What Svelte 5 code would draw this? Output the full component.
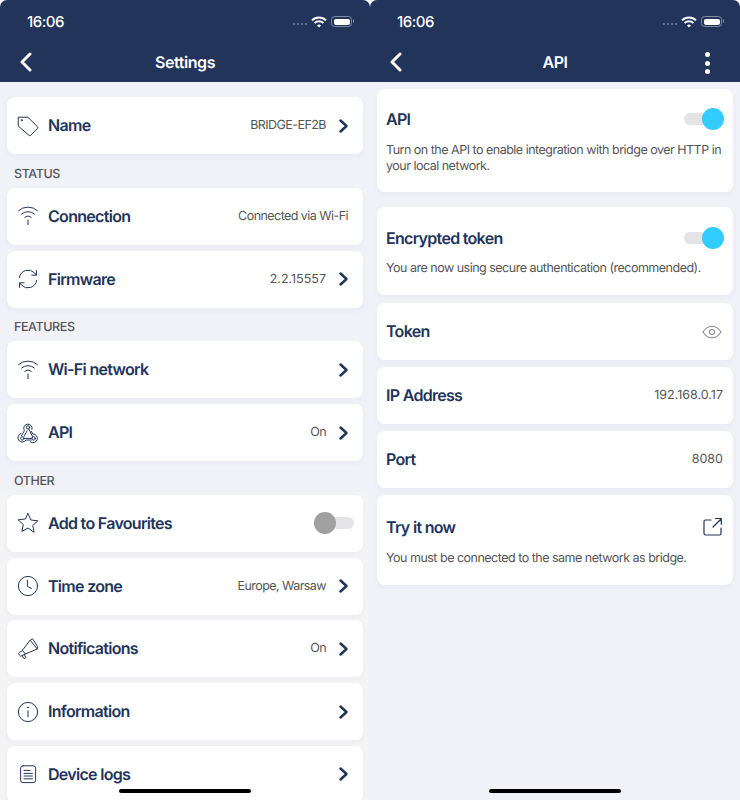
<script>
  const chevronRows = {
    features: [
      { icon: 'wifi', label: 'Wi-Fi network', chevron: true },
      { icon: 'hook', label: 'API', value: 'On', chevron: true }
    ],
    other: [
      { icon: 'star', label: 'Add to Favourites', toggle: true },
      { icon: 'clock', label: 'Time zone', value: 'Europe, Warsaw', chevron: true },
      { icon: 'horn', label: 'Notifications', value: 'On', chevron: true },
      { icon: 'info', label: 'Information', chevron: true },
      { icon: 'logs', label: 'Device logs', chevron: true }
    ],
    status: [
      { icon: 'wifi', label: 'Connection', value: 'Connected via Wi-Fi' },
      { icon: 'sync', label: 'Firmware', value: '2.2.15557', num: true, chevron: true }
    ]
  };
</script>

{#snippet statusBar()}
  <div class="status-bar">
    <span class="time">16:06</span>
    <div class="indicators">
      <span class="dots"><i></i><i></i><i></i><i></i></span>
      <svg width="16" height="12" viewBox="0 0 16 12" fill="none" stroke="#fff" stroke-width="2">
        <path d="M1 4.4a10 10 0 0 1 14 0" />
        <path d="M3.6 7a6.4 6.4 0 0 1 8.8 0" />
        <path d="M8 11.6 6 9.5a2.8 2.8 0 0 1 4 0z" fill="#fff" stroke="none" />
      </svg>
      <span class="battery"><b></b></span>
    </div>
  </div>
{/snippet}

{#snippet back()}
  <svg class="back" width="14" height="20" viewBox="0 0 14 20" fill="none" stroke="#fff" stroke-width="3" stroke-linecap="round" stroke-linejoin="round">
    <path d="M11 2 3 10l8 8" />
  </svg>
{/snippet}

{#snippet icon(name)}
  <svg class="icon" width="24" height="24" viewBox="0 0 24 24" fill="none" stroke="#22345a" stroke-width="1" stroke-linecap="round" stroke-linejoin="round">
    {#if name === 'tag'}
      <path d="M2.600 3.200h9.200l9.600 9.400a1.400 1.400 0 0 1 0 2l-6.600 6.600a1.400 1.400 0 0 1-2 0L2.600 12.400z" />
      <circle cx="5.800" cy="6.200" r="0.600" />
    {:else if name === 'wifi'}
      <path d="M2.600 6.600a14 14 0 0 1 18.800 0" />
      <path d="M5.600 10a9.600 9.600 0 0 1 12.800 0" />
      <path d="M8.800 13.200a5 5 0 0 1 6.400 0" />
      <path d="M12 16v4.600" />
    {:else if name === 'sync'}
      <path d="M3.400 10.600A8.800 8.800 0 0 1 18.600 6l1.600 2" />
      <path d="M20.400 3.600v4.600h-4.600" />
      <path d="M20.600 13.400A8.800 8.800 0 0 1 5.400 18l-1.600-2" />
      <path d="M3.600 20.400v-4.600h4.600" />
    {:else if name === 'hook'}
      <circle cx="12" cy="6.400" r="1.700" />
      <circle cx="6.400" cy="17.400" r="1.700" />
      <circle cx="17.600" cy="17.400" r="1.700" />
      <path d="M8.100 17.400h7.800" />
      <path d="M12.800 8 16.600 15.800" />
      <path d="M16 8.400a4.200 4.200 0 1 0-7.600 1.200L5.400 15" />
      <path d="M5 12.400a4.400 4.400 0 1 0 5 6.600h5.200" />
      <path d="M11 9.800 8.400 15" />
      <path d="M15.400 10.400l1.400 2.600a4.400 4.400 0 1 1-2.400 8" />
    {:else if name === 'star'}
      <path d="m12 2.600 2.900 6.400 7 .8-5.200 4.700 1.400 6.900L12 17l-6.100 3.400 1.400-6.900-5.200-4.700 7-.8z" />
    {:else if name === 'clock'}
      <circle cx="12" cy="12" r="9.600" />
      <path d="M11.400 6.200v6.200l4 2" />
    {:else if name === 'horn'}
      <path d="M14.400 3.400 21.200 12 9.400 17 6.600 13.600z" />
      <path d="M14.800 2.800l1.800-1 4.800 7.400-.2 2.600" />
      <path d="M6.600 13.600 3.600 15.200a1.800 1.800 0 0 0-.6 2.400l.4.600a1.800 1.800 0 0 0 2.400.6L9.400 17" />
      <path d="M6.400 19l1.600 2.600 1.800-1-1.400-3" />
    {:else if name === 'info'}
      <circle cx="12" cy="12" r="9.600" />
      <path d="M12 10.800v6" />
      <circle cx="12" cy="7.400" r="0.500" />
    {:else if name === 'logs'}
      <rect x="4.600" y="3.800" width="15" height="16.800" rx="2.400" />
      <path d="M8 8.400h6M8 11.400h8.400M8 14h8.400M8 16.800h8.400" />
    {/if}
  </svg>
{/snippet}

{#snippet chevron()}
  <svg class="chevron" width="12" height="16" viewBox="0 0 12 16" fill="none" stroke="#22345a" stroke-width="2.500" stroke-linecap="round" stroke-linejoin="round">
    <path d="m2.500 2.500 6 5.500-6 5.500" />
  </svg>
{/snippet}

{#snippet row(item)}
  <div class="card row">
    {@render icon(item.icon)}
    <span class="label">{item.label}</span>
    {#if item.value}
      <span class="value" class:num={item.num}>{item.value}</span>
    {/if}
    {#if item.chevron}
      {@render chevron()}
    {/if}
    {#if item.toggle}
      <span class="toggle"><i></i></span>
    {/if}
  </div>
{/snippet}

<div class="screens">
  <section class="screen">
    <header>
      {@render statusBar()}
      <div class="nav">
        {@render back()}
        <h1>Settings</h1>
      </div>
    </header>
    <main class="settings">
      <div class="group">
        {@render row({ icon: 'tag', label: 'Name', value: 'BRIDGE-EF2B', chevron: true })}
      </div>
      <h2>STATUS</h2>
      <div class="group">
        {#each chevronRows.status as item}
          {@render row(item)}
        {/each}
      </div>
      <h2>FEATURES</h2>
      <div class="group">
        {#each chevronRows.features as item}
          {@render row(item)}
        {/each}
      </div>
      <h2>OTHER</h2>
      <div class="group other">
        {#each chevronRows.other as item}
          {@render row(item)}
        {/each}
      </div>
    </main>
    <div class="home"></div>
  </section>

  <section class="screen">
    <header>
      {@render statusBar()}
      <div class="nav">
        {@render back()}
        <h1>API</h1>
        <span class="more"><i></i><i></i><i></i></span>
      </div>
    </header>
    <main class="api">
      <div class="card block tall">
        <div class="block-head">
          <span class="label">API</span>
          <span class="toggle on"><i></i></span>
        </div>
        <p>Turn on the API to enable integration with bridge over HTTP in your local network.</p>
      </div>
      <div class="card block encrypted">
        <div class="block-head">
          <span class="label">Encrypted token</span>
          <span class="toggle on"><i></i></span>
        </div>
        <p>You are now using secure authentication (recommended).</p>
      </div>
      <div class="stack">
        <div class="card plain">
          <span class="label">Token</span>
          <svg width="20" height="14" viewBox="0 0 20 14" fill="none" stroke="#8c8c8c" stroke-width="1.100">
            <path d="M1 7c2.400-3.800 5.400-5.800 9-5.800s6.600 2 9 5.800c-2.400 3.800-5.400 5.800-9 5.800S3.400 10.800 1 7z" />
            <circle cx="10" cy="7" r="2.500" />
          </svg>
        </div>
        <div class="card plain">
          <span class="label">IP Address</span>
          <span class="value num">192.168.0.17</span>
        </div>
        <div class="card plain">
          <span class="label">Port</span>
          <span class="value num">8080</span>
        </div>
        <div class="card block try">
          <div class="block-head">
            <span class="label">Try it now</span>
            <svg class="open" width="20" height="20" viewBox="0 0 20 20" fill="none" stroke="#22345a" stroke-width="1.200" stroke-linecap="round" stroke-linejoin="round">
              <path d="M8 3H2.500A1.500 1.500 0 0 0 1 4.500v12A1.500 1.500 0 0 0 2.500 18h14a1.500 1.500 0 0 0 1.500-1.500V11" />
              <path d="M10 10 18 2M12.500 1.500h5.800v5.800" />
            </svg>
          </div>
          <p>You must be connected to the same network as bridge.</p>
        </div>
      </div>
    </main>
    <div class="home"></div>
  </section>
</div>

<style>
  :global(body) {
    background: #fff;
    font-family: Inter, "Liberation Sans", sans-serif;
    text-rendering: geometricPrecision;
  }

  .screens {
    display: flex;
    width: 740px;
    height: 800px;
    overflow: hidden;
  }

  .screen {
    position: relative;
    width: 370px;
    height: 800px;
    overflow: hidden;
    background: #f1f1f8;
    border-radius: 7px 7px 0 0;
  }

  header {
    height: 82px;
    background: #22345a;
    color: #fff;
  }

  .status-bar {
    display: flex;
    align-items: center;
    justify-content: space-between;
    height: 44px;
    padding: 0 16px 1px 27px;
    box-sizing: border-box;
  }

  .time {
    font-size: 15px;
    font-weight: 500;
    letter-spacing: -0.5px;
  }

  .indicators {
    display: flex;
    align-items: center;
    gap: 4px;
  }

  .dots {
    display: flex;
    gap: 1.500px;
    margin-top: 5px;
  }

  .dots i {
    width: 2.500px;
    height: 2.500px;
    background: #5f6d8b;
  }

  .battery {
    position: relative;
    display: block;
    width: 21px;
    height: 11px;
    margin-right: 2px;
    padding: 1.500px;
    box-sizing: border-box;
    border: 1px solid #7f8aa3;
    border-radius: 3.500px;
  }

  .battery b {
    display: block;
    width: 100%;
    height: 100%;
    background: #fff;
    border-radius: 2px;
  }

  .battery::after {
    content: "";
    position: absolute;
    right: -3px;
    top: 2px;
    width: 1.500px;
    height: 4px;
    background: #7f8aa3;
    border-radius: 0 1px 1px 0;
  }

  .nav {
    position: relative;
    height: 38px;
    display: flex;
    align-items: center;
    justify-content: center;
  }

  .back {
    position: absolute;
    left: 19px;
    top: 8px;
  }

  h1 {
    margin: 0;
    font-size: 16px;
    font-weight: 600;
    letter-spacing: -0.4px;
    position: relative;
    top: -1px;
  }

  .more {
    position: absolute;
    right: 30px;
    top: 8px;
    display: flex;
    flex-direction: column;
    gap: 3.500px;
  }

  .more i {
    width: 5px;
    height: 5px;
    border-radius: 50%;
    background: #fff;
  }

  main {
    padding: 0 7px;
  }

  .settings {
    padding-top: 15px;
  }

  .api {
    padding-top: 7px;
  }

  .group {
    display: flex;
    flex-direction: column;
    gap: 5.750px;
  }

  .other {
    margin: -2px -5px 0 -7px;
    padding: 2px 5px 40px 7px;
    background: #f4f4f6;
  }

  .stack {
    display: flex;
    flex-direction: column;
    gap: 7px;
  }

  h2 {
    margin: 0;
    height: 33.750px;
    padding: 12.500px 0 0 7px;
    box-sizing: border-box;
    font-size: 12.500px;
    line-height: 15px;
    font-weight: 500;
    letter-spacing: -0.4px;
    color: #555;
  }

  .card {
    background: #fff;
    border-radius: 8px;
    box-shadow: 0 2px 6px rgba(34, 52, 90, 0.04);
  }

  .row {
    display: flex;
    align-items: center;
    flex: none;
    height: 57px;
    box-sizing: border-box;
    padding: 0 9px;
  }

  .icon {
    flex: none;
    margin-right: 8px;
  }

  .label {
    font-size: 16px;
    font-weight: 600;
    letter-spacing: -0.7px;
    color: #22345a;
    position: relative;
    top: -0.500px;
  }

  .value {
    margin-left: auto;
    font-size: 12.500px;
    letter-spacing: -0.550px;
    color: #555;
  }

  .value.num {
    letter-spacing: 0;
  }

  .row .value:last-child {
    margin-right: 6px;
  }

  .plain .value {
    margin-right: 1px;
  }

  .chevron {
    flex: none;
    margin-left: 12px;
    margin-right: 4px;
  }

  .row .label + .chevron {
    margin-left: auto;
  }

  .toggle {
    position: relative;
    display: block;
    flex: none;
    width: 40px;
    height: 12px;
    border-radius: 6px;
    background: #e4e4e6;
  }

  .row .toggle {
    margin-left: auto;
  }

  .toggle i {
    position: absolute;
    left: 0;
    top: -5px;
    width: 22px;
    height: 22px;
    border-radius: 50%;
    background: #a0a0a0;
  }

  .toggle.on i {
    left: auto;
    right: 0;
    background: #33ccff;
  }

  .block {
    padding: 19px 9px 0;
    box-sizing: border-box;
  }

  .tall {
    height: 103px;
    margin-bottom: 15px;
  }

  .encrypted {
    height: 88px;
    margin-bottom: 8px;
    padding-top: 20px;
  }

  .try {
    height: 90px;
    padding-top: 21px;
  }

  .block-head {
    display: flex;
    align-items: center;
    justify-content: space-between;
    height: 22px;
    margin-bottom: 13px;
  }

  .encrypted .block-head {
    margin-bottom: 12px;
  }

  .open {
    margin-right: 1px;
  }

  p {
    margin: 0;
    font-size: 12.500px;
    line-height: 15.500px;
    letter-spacing: -0.500px;
    color: #555;
  }

  .plain {
    display: flex;
    align-items: center;
    justify-content: space-between;
    height: 57px;
    padding: 0 9px;
  }

  .plain svg {
    margin-right: 2px;
  }

  .home {
    position: absolute;
    left: 119px;
    bottom: 7px;
    width: 132px;
    height: 4px;
    border-radius: 2px;
    background: #000;
  }
</style>
